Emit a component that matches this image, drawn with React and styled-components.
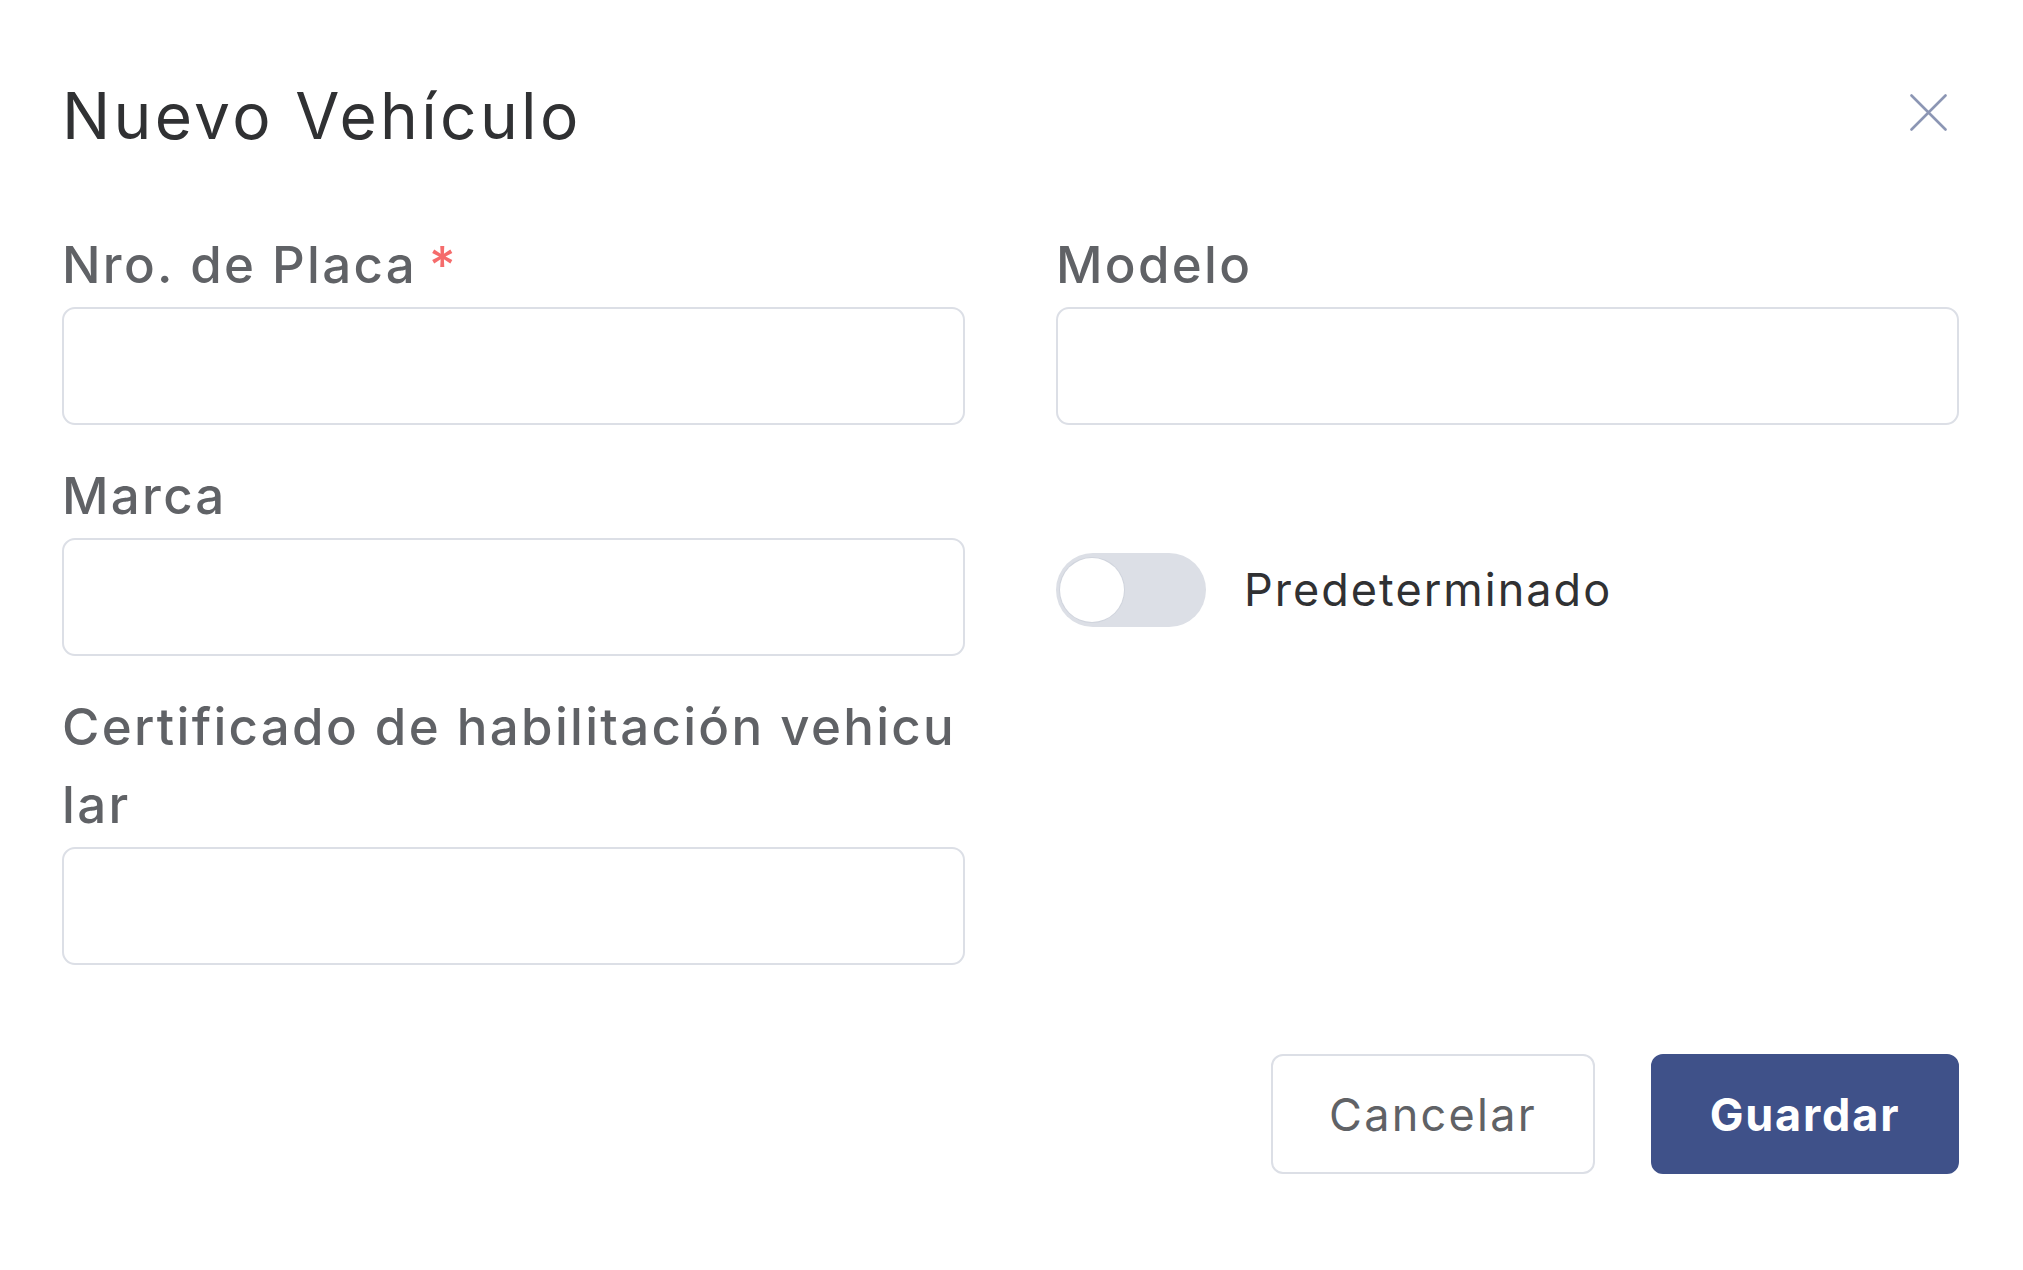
import React from "react";
import styled, { createGlobalStyle } from "styled-components";

const GlobalStyle = createGlobalStyle`
  html, body {
    margin: 0;
    padding: 0;
    background: #ffffff;
  }
  body {
    font-family: Inter, "Open Sans", "Liberation Sans", sans-serif;
    -webkit-font-smoothing: antialiased;
  }
  * { box-sizing: border-box; }
`;

const Modal = styled.div`
  width: 2023px;
  min-height: 1270px;
  padding: 68px 64px 0 62px;
  background: #ffffff;
`;

const Header = styled.header`
  display: flex;
  align-items: center;
  justify-content: space-between;
  height: 96px;
`;

const Title = styled.h2`
  margin: 0;
  font-size: 64px;
  line-height: 96px;
  font-weight: 400;
  color: #303133;
  letter-spacing: 0.052em;
`;

const CloseButton = styled.button`
  display: flex;
  align-items: center;
  justify-content: center;
  width: 37px;
  height: 37px;
  padding: 0;
  margin-top: -8px;
  margin-right: 12px;
  border: none;
  background: transparent;
  cursor: pointer;
`;

const Form = styled.form`
  display: grid;
  grid-template-columns: 1fr 1fr;
  column-gap: 91px;
  row-gap: 32px;
  margin-top: 62px;
`;

const Field = styled.div`
  display: flex;
  flex-direction: column;
  min-width: 0;
`;

const Label = styled.label`
  display: block;
  margin-bottom: 3px;
  font-size: 51px;
  line-height: 78px;
  font-weight: 500;
  color: #606266;
  letter-spacing: 0.045em;
  word-break: break-all;
`;

const Required = styled.span`
  margin-left: 12px;
  color: #f56c6c;
`;

const Input = styled.input`
  width: 100%;
  height: 118px;
  padding: 0 30px;
  border: 2px solid #dcdfe6;
  border-radius: 13px;
  background: #ffffff;
  font-family: inherit;
  font-size: 44px;
  color: #303133;
  outline: none;
`;

const SwitchCell = styled.div`
  display: flex;
  align-items: center;
  gap: 38px;
  padding-top: 96px;
  align-self: start;
`;

const SwitchTrack = styled.button`
  position: relative;
  flex: none;
  width: 150px;
  height: 74px;
  padding: 0;
  border: none;
  border-radius: 37px;
  background: ${(p) => (p.$on ? "#3f5189" : "#dcdfe6")};
  cursor: pointer;
`;

const SwitchKnob = styled.span`
  position: absolute;
  top: 5px;
  left: ${(p) => (p.$on ? "82px" : "4px")};
  width: 64px;
  height: 64px;
  border-radius: 50%;
  background: #ffffff;
  box-shadow: 0 0 0 1px rgba(200, 205, 215, 0.6);
`;

const SwitchText = styled.span`
  font-size: 45px;
  line-height: 74px;
  font-weight: 400;
  color: #303133;
  letter-spacing: 0.045em;
`;

const Footer = styled.div`
  display: flex;
  justify-content: flex-end;
  gap: 56px;
  margin-top: 89px;
`;

const Button = styled.button`
  height: 120px;
  padding: 0;
  width: ${(p) => (p.$primary ? "308px" : "324px")};
  border-radius: 12px;
  border: 2px solid ${(p) => (p.$primary ? "#3f5189" : "#dcdfe6")};
  background: ${(p) => (p.$primary ? "#3f5189" : "#ffffff")};
  color: ${(p) => (p.$primary ? "#ffffff" : "#606266")};
  font-family: inherit;
  font-size: 45px;
  font-weight: ${(p) => (p.$primary ? 700 : 400)};
  letter-spacing: ${(p) => (p.$primary ? "0.04em" : "0.05em")};
  cursor: pointer;
`;

function CloseIcon() {
  return (
    <svg width="37" height="37" viewBox="0 0 37 37" fill="none">
      <path
        d="M1.5 1.5 L35.5 35.5 M35.5 1.5 L1.5 35.5"
        stroke="#8c96b4"
        strokeWidth="2.6"
        strokeLinecap="round"
      />
    </svg>
  );
}

export default function App() {
  const [on, setOn] = React.useState(false);
  return (
    <>
      <GlobalStyle />
      <Modal>
        <Header>
          <Title>Nuevo Vehículo</Title>
          <CloseButton type="button" aria-label="Cerrar">
            <CloseIcon />
          </CloseButton>
        </Header>
        <Form onSubmit={(e) => e.preventDefault()}>
          <Field>
            <Label>
              Nro. de Placa<Required>*</Required>
            </Label>
            <Input />
          </Field>
          <Field>
            <Label>Modelo</Label>
            <Input />
          </Field>
          <Field>
            <Label>Marca</Label>
            <Input />
          </Field>
          <SwitchCell>
            <SwitchTrack type="button" $on={on} onClick={() => setOn(!on)}>
              <SwitchKnob $on={on} />
            </SwitchTrack>
            <SwitchText>Predeterminado</SwitchText>
          </SwitchCell>
          <Field>
            <Label>Certificado de habilitación vehicular</Label>
            <Input />
          </Field>
        </Form>
        <Footer>
          <Button type="button">Cancelar</Button>
          <Button type="button" $primary>
            Guardar
          </Button>
        </Footer>
      </Modal>
    </>
  );
}
